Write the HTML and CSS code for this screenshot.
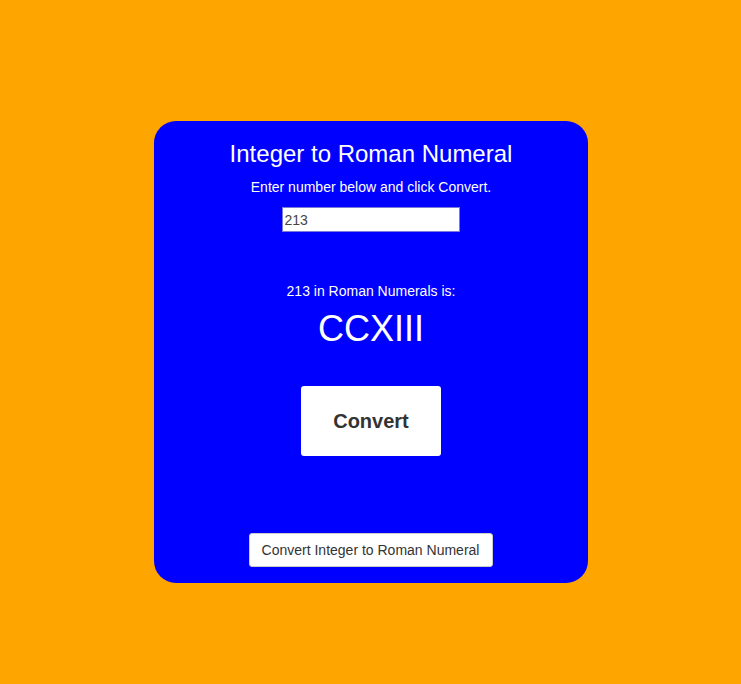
FILE: index.html
```html
<!DOCTYPE html>
<html>
<head>
<meta charset="utf-8">
<link rel="stylesheet" href="styles.css">
</head>
<body>
<div class="card">
  <h1 class="title">Integer to Roman Numeral</h1>
  <p class="hint">Enter number below and click Convert.</p>
  <input class="num" type="text" value="213">
  <p class="result-label">213 in Roman Numerals is:</p>
  <p class="result">CCXIII</p>
  <button class="convert">Convert</button>
  <div class="spacer"></div>
  <button class="link-btn">Convert Integer to Roman Numeral</button>
</div>
</body>
</html>
```
FILE: styles.css
```css
html, body {
  margin: 0;
  padding: 0;
}
body {
  background: #ffa500;
  width: 741px;
  height: 684px;
  display: flex;
  justify-content: center;
  align-items: flex-start;
  font-family: "Liberation Sans", Arial, sans-serif;
}
.card {
  margin-top: 121px;
  margin-left: 1px;
  width: 434px;
  height: 462px;
  box-sizing: border-box;
  background: #0000ff;
  border-radius: 22px;
  color: #fff;
  display: flex;
  flex-direction: column;
  align-items: center;
  padding-top: 19px;
  padding-bottom: 16px;
}
.title {
  margin: 0;
  font-size: 24px;
  line-height: 28px;
  font-weight: normal;
}
.hint {
  margin: 11px 0 0;
  font-size: 14px;
  line-height: 16px;
}
.num {
  margin-top: 12px;
  margin-right: 1px;
  width: 178px;
  height: 25px;
  box-sizing: border-box;
  border: 1px solid #7a7ad8;
  padding: 1px 2px;
  font-family: "Liberation Sans", Arial, sans-serif;
  font-size: 14px;
  color: #444;
  background: #fff;
  border-radius: 0;
  outline: none;
}
.result-label {
  margin: 51px 0 0;
  font-size: 14px;
  line-height: 16px;
}
.result {
  margin: 10px 0 0;
  font-size: 36px;
  line-height: 40px;
}
.convert {
  margin-top: 37px;
  width: 140px;
  height: 70px;
  border: none;
  border-radius: 3px;
  background: #fff;
  color: #333;
  font-family: "Liberation Sans", Arial, sans-serif;
  font-weight: bold;
  font-size: 20px;
  padding: 0;
}
.spacer {
  flex: 1;
}
.link-btn {
  margin-right: 1px;
  width: 244px;
  height: 34px;
  border: 1px solid #ccc;
  border-radius: 3px;
  background: #fff;
  color: #333;
  font-family: "Liberation Sans", Arial, sans-serif;
  font-size: 14px;
  padding: 0;
}
```
